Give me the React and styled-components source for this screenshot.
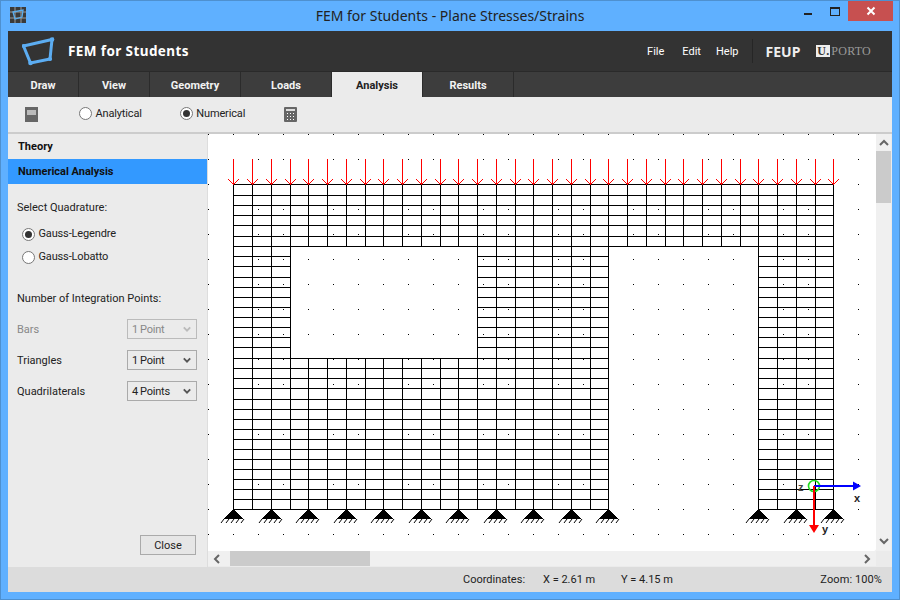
import styled, { createGlobalStyle } from "styled-components";

const UI_FONT = `Roboto, "Noto Sans", sans-serif`;
const BRAND_FONT = `"Noto Sans", "Liberation Sans", sans-serif`;

const GlobalStyle = createGlobalStyle`
  html, body { margin: 0; padding: 0; }
  body { width: 900px; height: 600px; overflow: hidden; font-family: ${UI_FONT}; }
  * { box-sizing: border-box; }
`;

const Window = styled.div`
  width: 900px;
  height: 600px;
  background: #5fb0ff;
  border: 1px solid #4e90cf;
  display: flex;
  flex-direction: column;
`;

const TitleBar = styled.div`
  height: 30px;
  flex: none;
  display: grid;
  grid-template-columns: 1fr auto 1fr;
  align-items: start;
`;

const AppIcon = styled.svg`
  display: block;
  margin: 6px 0 0 9px;
`;

const TitleText = styled.div`
  font-family: ${BRAND_FONT};
  font-size: 14px;
  line-height: 30px;
  color: #222;
`;

const WindowButtons = styled.div`
  display: flex;
  justify-content: flex-end;
  align-items: flex-start;
`;

const WinIcon = styled.svg`
  display: block;
  margin-top: ${(p) => p.$top}px;
  margin-right: ${(p) => p.$right}px;
`;

const CloseButton = styled.div`
  width: 45px;
  height: 20px;
  margin-right: 6px;
  background: #c75050;
  display: flex;
  align-items: center;
  justify-content: center;
`;

const Frame = styled.div`
  flex: none;
  width: 884px;
  height: 561px;
  margin-left: 7px;
  display: flex;
  flex-direction: column;
  background: #ebebeb;
`;

const Header = styled.div`
  height: 41px;
  flex: none;
  background: #333;
  border-bottom: 1px solid #2a2a2a;
  display: flex;
  align-items: center;
  padding-left: 14px;
`;

const Brand = styled.div`
  font-family: ${BRAND_FONT};
  font-weight: 700;
  font-size: 13.5px;
  letter-spacing: 0.4px;
  color: #fff;
  margin-left: 12px;
  margin-right: auto;
`;

const MenuItem = styled.div`
  font-size: 11px;
  color: #fff;
  margin-right: ${(p) => p.$gap}px;
`;

const Separator = styled.div`
  width: 1px;
  height: 24px;
  background: #262626;
  margin-right: 13px;
`;

const Feup = styled.div`
  font-family: ${BRAND_FONT};
  font-weight: 700;
  font-size: 14px;
  color: #eee;
  margin-right: 16px;
`;

const Porto = styled.div`
  display: flex;
  align-items: center;
  margin-right: 21px;
  font-family: "Liberation Serif", serif;
  font-size: 12px;
  color: #9a9a9a;
  letter-spacing: 0.25px;
`;

const PortoMark = styled.span`
  width: 14px;
  height: 12px;
  background: #eee;
  color: #333;
  font-weight: 700;
  font-size: 12px;
  line-height: 12px;
  text-align: center;
  margin-right: 1px;
`;

const Tabs = styled.div`
  height: 25px;
  flex: none;
  background: #3d3d3d;
  display: flex;
`;

const Tab = styled.div`
  width: ${(p) => p.$width}px;
  border-right: 1px solid #2b2b2b;
  font-weight: 700;
  font-size: 11px;
  line-height: 27px;
  text-align: center;
  color: ${(p) => (p.$active ? "#222" : "#f2f2f2")};
  background: ${(p) => (p.$active ? "#ebebeb" : "transparent")};
`;

const Toolbar = styled.div`
  height: 37px;
  flex: none;
  background: #ebebeb;
  border-bottom: 2px solid #ccc;
  display: flex;
  align-items: center;
  padding-left: 17px;
`;

const ToolIcon = styled.svg`
  display: block;
  margin-right: ${(p) => p.$gap || 0}px;
`;

const RadioLabel = styled.div`
  display: flex;
  align-items: center;
  gap: 3.5px;
  font-size: 11px;
  letter-spacing: -0.15px;
  line-height: 16px;
  color: #222;
`;

const RadioDot = styled.span`
  width: 13px;
  height: 13px;
  flex: none;
  border-radius: 50%;
  border: 1px solid #777;
  background: #fff;
  display: flex;
  align-items: center;
  justify-content: center;
  &::after {
    content: "";
    width: 7px;
    height: 7px;
    border-radius: 50%;
    background: ${(p) => (p.$checked ? "#333" : "transparent")};
  }
`;

const ToolRadios = styled.div`
  display: flex;
  gap: 38px;
  margin-right: 39px;
  margin-bottom: 2px;
`;

const Main = styled.div`
  flex: none;
  height: 433px;
  display: flex;
`;

const Sidebar = styled.div`
  width: 200px;
  flex: none;
  background: #ebebeb;
  border-right: 1px solid #ddd;
  display: flex;
  flex-direction: column;
`;

const SideHeading = styled.div`
  height: 25px;
  flex: none;
  font-weight: 700;
  font-size: 11px;
  line-height: 26px;
  padding-left: 10px;
  color: #111;
  background: ${(p) => (p.$active ? "#3399ff" : "transparent")};
`;

const SideBody = styled.div`
  flex: 1;
  padding: 15px 10px 12px 9px;
  display: flex;
  flex-direction: column;
`;

const SideLabel = styled.div`
  font-size: 11px;
  line-height: 18px;
  color: #222;
`;

const RadioGroup = styled.div`
  display: flex;
  flex-direction: column;
  gap: 7px;
  margin: 9px 0 25px 5px;
`;

const SideRow = styled.div`
  height: 20px;
  display: flex;
  align-items: center;
  justify-content: space-between;
  font-size: 11px;
  color: ${(p) => (p.$disabled ? "#888" : "#222")};
`;

const Fields = styled.div`
  margin-top: 11px;
  display: flex;
  flex-direction: column;
  gap: 11px;
`;

const SelectBox = styled.div`
  width: 70px;
  height: 20px;
  border: 1px solid ${(p) => (p.$disabled ? "#bbb" : "#aaa")};
  background: #ebebeb;
  display: flex;
  align-items: center;
  justify-content: space-between;
  padding: 0 5px 0 4px;
  font-size: 11px;
  letter-spacing: -0.2px;
  word-spacing: -0.5px;
  color: ${(p) => (p.$disabled ? "#888" : "#222")};
`;

const CloseBtn = styled.div`
  margin-top: auto;
  align-self: flex-end;
  width: 56px;
  height: 20px;
  border: 1px solid #aaa;
  background: #e6e6e6;
  font-size: 11px;
  line-height: 20px;
  text-align: center;
  color: #222;
  margin-right: 1px;
`;

const CanvasPane = styled.div`
  flex: 1;
  min-width: 0;
  display: grid;
  grid-template-columns: 668px 16px;
  grid-template-rows: 417px 16px;
  background: #ebebeb;
`;

const Canvas = styled.svg`
  display: block;
  background: #fff;
  border-bottom-right-radius: 2px;
`;

const VScroll = styled.div`
  background: #f0f0f0;
  display: flex;
  flex-direction: column;
  align-items: center;
  padding-top: 4px;
  width: 15px;
`;

const VThumb = styled.div`
  width: 15px;
  height: 52px;
  background: #cbcbcb;
  margin-top: 3px;
`;

const HScroll = styled.div`
  background: #f0f0f0;
  display: flex;
  align-items: center;
  padding-left: 4px;
  padding-right: 4px;
  height: 15px;
`;

const HThumb = styled.div`
  width: 140px;
  height: 15px;
  background: #cbcbcb;
  margin-left: 8px;
  margin-right: auto;
`;

const ScrollEnd = styled.div`
  margin-top: auto;
  margin-bottom: 5px;
`;

const StatusBar = styled.div`
  flex: none;
  height: 25px;
  background: #dcdcdc;
  display: flex;
  align-items: center;
  font-size: 11px;
  color: #222;
  padding-left: 455px;
`;

const StatusItem = styled.div`
  width: ${(p) => p.$width}px;
  flex: none;
`;

const ZoomInfo = styled.div`
  margin-left: auto;
  margin-right: 10px;
  letter-spacing: 0.1px;
`;

const AxisLabel = styled.text`
  font-family: "Liberation Sans", sans-serif;
  font-weight: 700;
  font-size: 11px;
  fill: ${(p) => p.$color || "#222"};
`;

function Chevron({ dir = "down", color = "#666", size = 10, width = 2 }) {
  const points = {
    down: "1,3 5,7 9,3",
    up: "1,7 5,3 9,7",
    left: "7,1 3,5 7,9",
    right: "3,1 7,5 3,9",
  }[dir];
  return (
    <svg width={size} height={size} viewBox="0 0 10 10" style={{ display: "block", flex: "none" }}>
      <polyline points={points} fill="none" stroke={color} strokeWidth={width} />
    </svg>
  );
}

const xs = Array.from({ length: 33 }, (_, i) => Math.ceil(233 + 18.75 * i));
const ys = [
  184, 195, 205, 215, 225, 236, 246, 256, 266, 277, 287, 297, 307, 317, 327, 337, 347, 358, 368, 378,
  388, 399, 409, 419, 429, 439, 449, 459, 469, 479, 489, 499, 509,
];
const supports = [233, 271, 308, 346, 383, 421, 458, 496, 533, 571, 608, 758, 796, 833];

function horizontalSpans(y) {
  if (y <= 246) return [[233, 833]];
  if (y < 358) return [[233, 290], [477, 608], [758, 833]];
  return [[233, 608], [758, 833]];
}

function verticalSpans(x) {
  if (x <= 290 || (x >= 477 && x <= 608) || x >= 758) return [[184, 509]];
  if (x < 477) return [[184, 246], [358, 509]];
  return [[184, 246]];
}

function Mesh() {
  const dots = [];
  for (let x = 208; x <= 858; x += 25) {
    for (let y = 134; y <= 534; y += 25) {
      dots.push(<rect key={`${x}-${y}`} x={x} y={y} width="1" height="1" fill="#000" />);
    }
  }
  return (
    <Canvas width="668" height="417" viewBox="208 134 668 417">
      {dots}
      <g shapeRendering="crispEdges" stroke="#000" strokeWidth="1" fill="none">
        {ys.map((y) =>
          horizontalSpans(y).map(([a, b]) => (
            <line key={`h${y}-${a}`} x1={a} x2={b + 1} y1={y + 0.5} y2={y + 0.5} />
          ))
        )}
        {xs.map((x) =>
          verticalSpans(x).map(([a, b]) => (
            <line key={`v${x}-${a}`} x1={x + 0.5} x2={x + 0.5} y1={a} y2={b + 1} />
          ))
        )}
      </g>
      <g shapeRendering="crispEdges" stroke="#f00" strokeWidth="1" fill="none">
        {xs.map((x) => (
          <path key={`a${x}`} d={`M${x + 0.5} 159V184M${x - 5} 179L${x + 0.5} 184.5L${x + 6} 179`} />
        ))}
      </g>
      {supports.map((x) => (
        <g key={`s${x}`}>
          <path d={`M${x + 0.5} 509L${x + 11} 519H${x - 10}Z`} fill="#000" shapeRendering="crispEdges" />
          <path
            d={`M${x - 12} 523L${x - 9} 519M${x - 7} 523L${x - 4} 519M${x - 2} 523L${x + 1} 519M${x + 3} 523L${x + 6} 519M${x + 8} 523L${x + 11} 519`}
            stroke="#000"
            fill="none"
          />
        </g>
      ))}
      <circle cx="814" cy="486" r="5.5" fill="none" stroke="#22dd22" strokeWidth="1.6" />
      <path d="M814 485H853V481.5L861 486L853 490.5V487H814Z" fill="#0000ff" />
      <path d="M813 486H815V525H819L814 533L809 525H813Z" fill="#ff0000" />
      <AxisLabel x="798" y="491" $color="#444">z</AxisLabel>
      <AxisLabel x="854" y="502">x</AxisLabel>
      <AxisLabel x="822" y="533">y</AxisLabel>
    </Canvas>
  );
}

function Logo() {
  return (
    <svg width="34" height="30" viewBox="0 0 34 30" style={{ display: "block", flex: "none" }}>
      <path d="M1.5 10 L30 3.5 L28 23 L8.5 27 Z" fill="none" stroke="#5cadf2" strokeWidth="3" />
      <circle cx="1.8" cy="10" r="2" fill="#5cadf2" />
      <circle cx="30" cy="3.5" r="2.3" fill="#5cadf2" />
      <circle cx="28" cy="23" r="2.1" fill="#5cadf2" />
      <circle cx="8.5" cy="27" r="2.3" fill="#5cadf2" />
    </svg>
  );
}

const TABS = [
  ["Draw", 71],
  ["View", 71],
  ["Geometry", 91],
  ["Loads", 91],
  ["Analysis", 91, true],
  ["Results", 91],
];

const FIELDS = [
  ["Bars", "1 Point", true],
  ["Triangles", "1 Point", false],
  ["Quadrilaterals", "4 Points", false],
];

export default function App() {
  return (
    <>
      <GlobalStyle />
      <Window>
        <TitleBar>
          <AppIcon width="16" height="16" viewBox="0 0 16 16">
            <rect width="16" height="16" fill="#3a3a3a" />
            <path d="M0 5H16M0 11H16M5 0V16M11 0V16" stroke="#9a9a9a" strokeWidth="1" />
            <path d="M3 5L13 3L12 10L5 12Z" fill="none" stroke="#5aaeee" strokeWidth="1.3" />
          </AppIcon>
          <TitleText>FEM for Students - Plane Stresses/Strains</TitleText>
          <WindowButtons>
            <WinIcon $top={5} $right={18} width="8" height="12" viewBox="0 0 8 12">
              <rect x="0" y="7" width="8" height="2" fill="#222" />
            </WinIcon>
            <WinIcon $top={6} $right={8} width="10" height="9" viewBox="0 0 10 9">
              <rect x="0.5" y="1" width="9" height="7.5" fill="none" stroke="#222" />
              <rect x="0" y="0" width="10" height="2" fill="#222" />
            </WinIcon>
            <CloseButton>
              <svg width="10" height="10" viewBox="0 0 10 10">
                <path d="M1.5 1.5L8.5 8.5M8.5 1.5L1.5 8.5" stroke="#fff" strokeWidth="2" />
              </svg>
            </CloseButton>
          </WindowButtons>
        </TitleBar>
        <Frame>
          <Header>
            <Logo />
            <Brand>FEM for Students</Brand>
            <MenuItem $gap={18}>File</MenuItem>
            <MenuItem $gap={15}>Edit</MenuItem>
            <MenuItem $gap={13}>Help</MenuItem>
            <Separator />
            <Feup>FEUP</Feup>
            <Porto>
              <PortoMark>U.</PortoMark>
              PORTO
            </Porto>
          </Header>
          <Tabs>
            {TABS.map(([label, width, active]) => (
              <Tab key={label} $width={width} $active={active}>
                {label}
              </Tab>
            ))}
          </Tabs>
          <Toolbar>
            <ToolIcon $gap={41} width="13" height="15" viewBox="0 0 13 15">
              <rect width="13" height="15" fill="#666" />
              <rect x="2" y="3" width="9" height="5" fill="#bbb" />
            </ToolIcon>
            <ToolRadios>
              <RadioLabel>
                <RadioDot />
                Analytical
              </RadioLabel>
              <RadioLabel>
                <RadioDot $checked />
                Numerical
              </RadioLabel>
            </ToolRadios>
            <ToolIcon width="13" height="15" viewBox="0 0 13 15">
              <rect width="13" height="15" rx="1" fill="#666" />
              <rect x="2" y="2" width="9" height="2" fill="#ddd" />
              <path
                d="M3 6h1v1H3zM6 6h1v1H6zM9 6h1v1H9zM3 9h1v1H3zM6 9h1v1H6zM9 9h1v1H9zM3 12h1v1H3zM6 12h1v1H6zM9 12h1v1H9z"
                fill="#fff"
              />
            </ToolIcon>
          </Toolbar>
          <Main>
            <Sidebar>
              <SideHeading>Theory</SideHeading>
              <SideHeading $active>Numerical Analysis</SideHeading>
              <SideBody>
                <SideLabel>Select Quadrature:</SideLabel>
                <RadioGroup>
                  <RadioLabel>
                    <RadioDot $checked />
                    Gauss-Legendre
                  </RadioLabel>
                  <RadioLabel>
                    <RadioDot />
                    Gauss-Lobatto
                  </RadioLabel>
                </RadioGroup>
                <SideLabel>Number of Integration Points:</SideLabel>
                <Fields>
                  {FIELDS.map(([label, value, disabled]) => (
                    <SideRow key={label} $disabled={disabled}>
                      {label}
                      <SelectBox $disabled={disabled}>
                        {value}
                        <Chevron size={8} width={2.4} color={disabled ? "#bbb" : "#555"} />
                      </SelectBox>
                    </SideRow>
                  ))}
                </Fields>
                <CloseBtn>Close</CloseBtn>
              </SideBody>
            </Sidebar>
            <CanvasPane>
              <Mesh />
              <VScroll>
                <Chevron dir="up" />
                <VThumb />
                <ScrollEnd>
                  <Chevron dir="down" />
                </ScrollEnd>
              </VScroll>
              <HScroll>
                <Chevron dir="left" />
                <HThumb />
                <Chevron dir="right" />
              </HScroll>
            </CanvasPane>
          </Main>
          <StatusBar>
            <StatusItem $width={80}>Coordinates:</StatusItem>
            <StatusItem $width={78}>X = 2.61 m</StatusItem>
            <StatusItem $width={80}>Y = 4.15 m</StatusItem>
            <ZoomInfo>Zoom: 100%</ZoomInfo>
          </StatusBar>
        </Frame>
      </Window>
    </>
  );
}
